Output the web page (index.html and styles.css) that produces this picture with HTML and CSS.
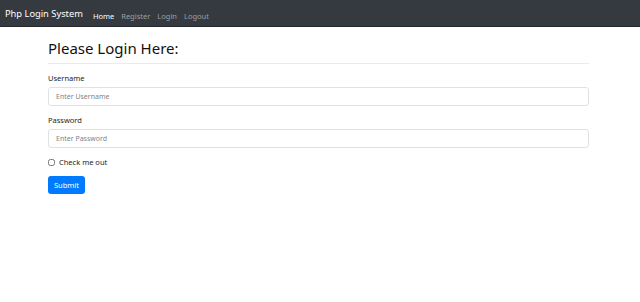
FILE: index.html
```html
<!doctype html>
<html lang="en">
<head>
  <meta charset="UTF-8">
  <meta name="viewport" content="width=device-width, initial-scale=1">
  <title>Php Login System</title>
  <link rel="stylesheet" href="styles.css">
</head>
<body>
<nav class="navbar">
  <a class="brand" href="#">Php Login System</a>
  <ul class="nav-links">
    <li><a class="active" href="#">Home</a></li>
    <li><a href="#">Register</a></li>
    <li><a href="#">Login</a></li>
    <li><a href="#">Logout</a></li>
  </ul>
</nav>
<div class="container">
  <h3 class="title">Please Login Here:</h3>
  <hr class="divider">
  <form class="login-form">
    <div class="form-group">
      <label for="username">Username</label>
      <input type="text" id="username" class="form-control" placeholder="Enter Username">
    </div>
    <div class="form-group">
      <label for="password">Password</label>
      <input type="password" id="password" class="form-control" placeholder="Enter Password">
    </div>
    <div class="form-check">
      <input type="checkbox" id="remember">
      <label for="remember">Check me out</label>
    </div>
    <button type="submit" class="btn">Submit</button>
  </form>
</div>
</body>
</html>
```

FILE: styles.css
```css
body {
  margin: 0;
  font-family: "Noto Sans", "Open Sans", sans-serif;
  background: #fff;
  color: #212529;
}
.navbar {
  display: flex;
  align-items: center;
  height: 26px;
  padding: 0 5px;
  background: #343a40;
  border-bottom: 1px solid #23272b;
}
.brand {
  font-size: 9.3px;
  color: #fff;
  text-decoration: none;
  margin-right: 10px;
}
.nav-links {
  display: flex;
  gap: 7px;
  list-style: none;
  margin: 0;
  padding: 0;
}
.nav-links a {
  font-size: 7.5px;
  color: rgba(255, 255, 255, 0.5);
  text-decoration: none;
}
.nav-links a.active {
  color: #fff;
}
.container {
  width: 541px;
  margin-left: 48px;
}
.title {
  margin: 11px 0 0;
  font-size: 15px;
  font-weight: 400;
  line-height: 20px;
  color: #111;
}
.divider {
  margin: 5px 0 8px;
  border: 0;
  border-top: 1px solid #e9ecef;
}
.form-group {
  display: flex;
  flex-direction: column;
  gap: 3px;
  margin-bottom: 8px;
}
label {
  font-size: 7.5px;
  line-height: 12px;
  color: #212529;
}
.form-control {
  box-sizing: border-box;
  height: 19px;
  padding: 0 7px;
  border: 1px solid #dfe2e5;
  border-radius: 3px;
  font-family: inherit;
  font-size: 7px;
}
.form-control::placeholder {
  color: #7d848a;
}
.form-check {
  display: flex;
  align-items: center;
  gap: 4px;
  height: 12px;
  margin: 5px 0 8px;
}
.form-check input {
  width: 7px;
  height: 7px;
  margin: 0;
}
.btn {
  display: block;
  width: 37px;
  height: 18px;
  padding: 0;
  border: none;
  border-radius: 3px;
  background: #007bff;
  color: #fff;
  font-family: inherit;
  font-size: 7.5px;
  cursor: pointer;
}
```
